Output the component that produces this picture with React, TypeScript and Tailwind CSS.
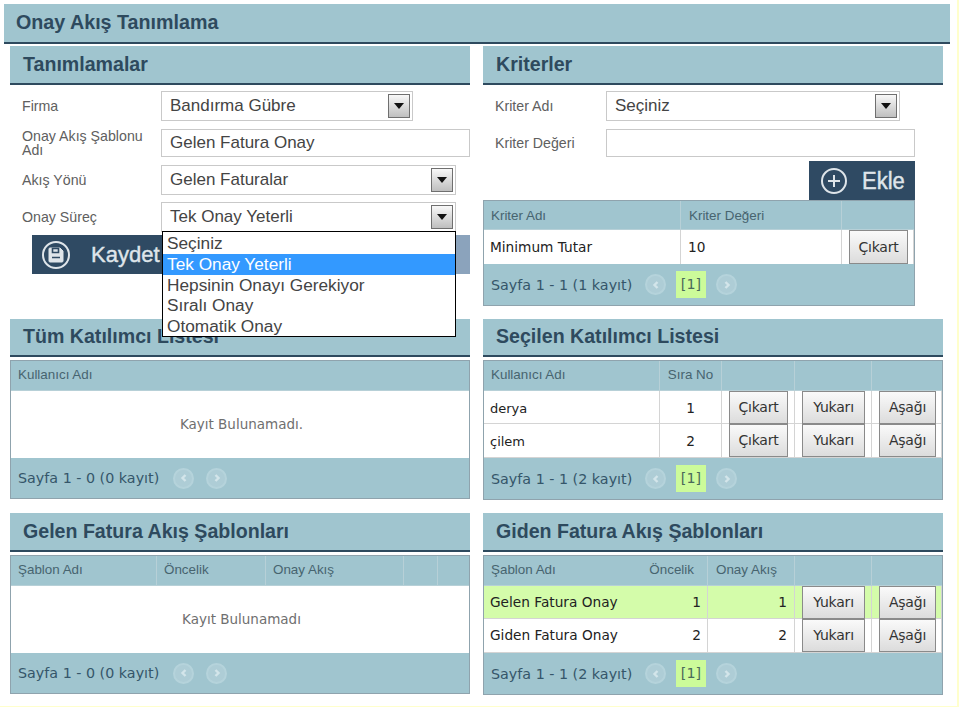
import type { ReactNode } from "react";

const Header = ({ title, h = "h-[39px]" }: { title: string; h?: string }) => (
  <div className={`${h} bg-[#a0c5cf] border-b-[2px] border-[#2e4a5e] pl-[13px] flex items-center text-[19.6px] font-bold text-[#2e4a5e]`}>
    {title}
  </div>
);

const Arrow = () => (
  <span className="w-[22px] h-[24px] border-[1px] border-[#6f6f6f] bg-gradient-to-b from-[#f8f8f8] to-[#bfbfbf] flex items-center justify-center">
    <svg width="10" height="6" viewBox="0 0 10 6">
      <path d="M0 0h10L5 6z" fill="#111" />
    </svg>
  </span>
);

const Select = ({ value, width, children }: { value: string; width: string; children?: ReactNode }) => (
  <div className={`relative h-[30px] ${width} border-[1px] border-[#c9c9c9] bg-white flex items-center justify-between pl-[8px] pr-[2px] text-[17px] text-[#444]`}>
    <span>{value}</span>
    <Arrow />
    {children}
  </div>
);

const Label = ({ children, w }: { children: ReactNode; w: string }) => (
  <div className={`${w} shrink-0 text-[14.2px] leading-[14px] text-[#606060]`}>{children}</div>
);

const Btn = ({ label, w }: { label: string; w: string }) => (
  <button className={`${w} h-[33px] border-[1px] border-[#8a8a8a] bg-gradient-to-b from-[#fafafa] to-[#dcdcdc] text-[14px] text-[#333] tracking-[-0.2px]`}>
    {label}
  </button>
);

const Circle = ({ dir }: { dir: "left" | "right" }) => (
  <span className="inline-flex w-[21px] h-[21px] rounded-full border-[2px] border-[#b5d3db] bg-[#aecdd6] items-center justify-center">
    <svg width="10" height="12" viewBox="0 0 10 12">
      <path d={dir === "left" ? "M6.5 3L3.5 6l3 3" : "M3.5 3l3 3-3 3"} fill="none" stroke="#d3e5ea" strokeWidth="2.4" />
    </svg>
  </span>
);

const Pager = ({ text, page, h = "h-[41px]" }: { text: string; page?: boolean; h?: string }) => (
  <div className={`${h} bg-[#a0c5cf] flex items-center pl-[7px] text-[14.3px] font-['DejaVu_Sans',sans-serif] text-[#35566a]`}>
    <span className={`${page ? "w-[154px]" : "w-[155px]"} pt-[2px]`}>{text}</span>
    <Circle dir="left" />
    {page ? (
      <>
        <span className="w-[30px] h-[27px] ml-[10px] bg-[#ccfb9a] flex items-center justify-center text-[#4a6a5a]">[1]</span>
        <span className="ml-[10px] flex">
          <Circle dir="right" />
        </span>
      </>
    ) : (
      <span className="ml-[12px] flex">
        <Circle dir="right" />
      </span>
    )}
  </div>
);

const GridBox = ({ children, w = "w-[460px]" }: { children: ReactNode; w?: string }) => (
  <div className={`${w} border-[1px] border-[#8fa3ad] bg-white overflow-hidden`}>{children}</div>
);

type HeadCell = { t?: ReactNode; line?: boolean; x?: string };

const Head = ({ cols, cells, h = "h-[30px]", pad = "" }: { cols: string; cells: HeadCell[]; h?: string; pad?: string }) => (
  <div className={`grid ${cols} ${h} bg-[#a0c5cf] border-b-[1px] border-[#b7d0d7] text-[13.4px] text-[#47646f] items-stretch`}>
    {cells.map((c, i) => (
      <div key={i} className={`flex items-center ${pad} ${c.x ?? "pl-[7px]"} ${c.line ? "border-r-[1px] border-[#b7d0d7]" : ""}`}>
        {c.t}
      </div>
    ))}
  </div>
);

const Cell = ({ children, className = "" }: { children?: ReactNode; className?: string }) => (
  <div className={`flex items-center border-r-[1px] border-[#d4d4d4] font-['DejaVu_Sans',sans-serif] text-[13.7px] text-[#222] ${className}`}>
    {children}
  </div>
);

const selectedCols = "grid-cols-[176px_62px_73px_77px_1fr]";
const gidenCols = "grid-cols-[224px_87px_77px_1fr]";
const kriterCols = "grid-cols-[197px_161px_1fr]";

const SelectedRow = ({ name, no, h }: { name: string; no: string; h: string }) => (
  <div className={`grid ${selectedCols} ${h} border-b-[1px] border-[#d4d4d4]`}>
    <Cell className="pl-[6px] pt-[2px] text-[13px]">{name}</Cell>
    <Cell className="justify-center pt-[2px]">{no}</Cell>
    <Cell className="pl-[7px]">
      <Btn label="Çıkart" w="w-[59px]" />
    </Cell>
    <Cell className="pl-[7px]">
      <Btn label="Yukarı" w="w-[63px]" />
    </Cell>
    <Cell className="pl-[7px] border-r-0">
      <Btn label="Aşağı" w="w-[57px]" />
    </Cell>
  </div>
);

const GidenRow = ({ name, no, h, active }: { name: string; no: string; h: string; active?: boolean }) => (
  <div className={`grid ${gidenCols} ${h} border-b-[1px] border-[#d4d4d4] ${active ? "bg-[#d4fcaa]" : ""}`}>
    <Cell className="pl-[6px] pr-[6px] justify-between">
      <span>{name}</span>
      <span>{no}</span>
    </Cell>
    <Cell className="justify-end pr-[7px]">{no}</Cell>
    <Cell className="pl-[7px]">
      <Btn label="Yukarı" w="w-[63px]" />
    </Cell>
    <Cell className="pl-[7px] border-r-0">
      <Btn label="Aşağı" w="w-[57px]" />
    </Cell>
  </div>
);

const Empty = ({ text }: { text: string }) => (
  <div className="h-[67px] pl-[3px] flex items-center justify-center font-['DejaVu_Sans',sans-serif] text-[13.5px] text-[#6f6f6f]">
    {text}
  </div>
);

const App = () => {
  return (
    <div className="w-[959px] h-[707px] bg-[#ffffcc] font-['Liberation_Sans',sans-serif] overflow-hidden">
      <div className="w-[957px] h-[706px] bg-white pt-[4px] pl-[4px]">
        <div className="w-[946px] h-[40px] bg-[#a0c5cf] border-b-[2px] border-[#2e4a5e] pl-[12px] flex items-center text-[19.7px] font-bold text-[#2e4a5e]">
          Onay Akış Tanımlama
        </div>

        <div className="pl-[6px] pt-[2px]">
          {/* tanimlamalar + kriterler */}
          <div className="grid grid-cols-[460px_460px] gap-x-[13px]">
            <div>
              <Header title="Tanımlamalar" />
              <div className="flex items-center mt-[6px] pl-[12px]">
                <Label w="w-[139px]">Firma</Label>
                <Select value="Bandırma Gübre" width="w-[252px]" />
              </div>
              <div className="flex items-center mt-[8px] pl-[12px]">
                <Label w="w-[139px]">Onay Akış Şablonu Adı</Label>
                <div className="w-[309px] h-[28px] border-[1px] border-[#c9c9c9] pl-[8px] flex items-center text-[17px] text-[#444]">
                  Gelen Fatura Onay
                </div>
              </div>
              <div className="flex items-center mt-[8px] pl-[12px]">
                <Label w="w-[139px]">Akış Yönü</Label>
                <Select value="Gelen Faturalar" width="w-[295px]" />
              </div>
              <div className="flex items-center mt-[7px] pl-[12px]">
                <Label w="w-[139px]">Onay Süreç</Label>
                <Select value="Tek Onay Yeterli" width="w-[295px] z-10">
                  <div className="absolute left-0 top-[28px] w-[294px] h-[106px] border-[1px] border-black bg-white pt-[1px] text-[17.25px] leading-[20.8px] text-[#444]">
                    <div className="pl-[4px]">Seçiniz</div>
                    <div className="pl-[4px] bg-[#3399ff] text-white">Tek Onay Yeterli</div>
                    <div className="pl-[4px]">Hepsinin Onayı Gerekiyor</div>
                    <div className="pl-[4px]">Sıralı Onay</div>
                    <div className="pl-[4px]">Otomatik Onay</div>
                  </div>
                </Select>
              </div>
              <div className="ml-[22px] mt-[3px] h-[39px] bg-[#8ba3bc]">
                <div className="w-[200px] h-full bg-[#2f4a63] flex items-center pl-[10px] text-[22px] text-[#dfe5ea]">
                  <svg width="28" height="28" viewBox="0 0 28 28" fill="none" stroke="#dfe5ea">
                    <circle cx="14" cy="14" r="13" strokeWidth="2" />
                    <path d="M7 8a1 1 0 0 1 1-1h10l3 3v10a1 1 0 0 1-1 1H8a1 1 0 0 1-1-1z" fill="#dfe5ea" strokeWidth="1" />
                    <path d="M10.5 7.5h6v4h-6zM10 16.5h8" stroke="#2f4a63" strokeWidth="1.6" />
                  </svg>
                  <span className="ml-[21px] [-webkit-text-stroke:0.4px_#dfe5ea]">Kaydet</span>
                </div>
              </div>
            </div>

            <div>
              <Header title="Kriterler" />
              <div className="flex items-center mt-[6px] pl-[12px]">
                <Label w="w-[111px]">Kriter Adı</Label>
                <Select value="Seçiniz" width="w-[294px]" />
              </div>
              <div className="flex items-center mt-[8px] pl-[12px]">
                <Label w="w-[111px]">Kriter Değeri</Label>
                <div className="w-[309px] h-[28px] border-[1px] border-[#c9c9c9]" />
              </div>
              <div className="w-[432px] flex justify-end mt-[4px]">
                <div className="w-[106px] h-[39px] bg-[#2f4a63] flex items-center pl-[12px] text-[22px] text-[#dfe5ea]">
                  <svg width="26" height="26" viewBox="0 0 26 26" fill="none" stroke="#dfe5ea" strokeWidth="2">
                    <circle cx="13" cy="13" r="12" />
                    <path d="M13 7v12M7 13h12" />
                  </svg>
                  <span className="ml-[15px] inline-block scale-y-110 [-webkit-text-stroke:0.4px_#dfe5ea]">Ekle</span>
                </div>
              </div>
              <GridBox w="w-[432px]">
                <Head
                  h="h-[29px]"
                  pad="pt-[2px]"
                  cols={kriterCols}
                  cells={[{ t: "Kriter Adı", line: true }, { t: "Kriter Değeri", line: true, x: "pl-[8px]" }, {}]}
                />
                <div className={`grid ${kriterCols} h-[34px]`}>
                  <Cell className="pl-[6px]">Minimum Tutar</Cell>
                  <Cell className="pl-[7px]">10</Cell>
                  <Cell className="pl-[7px] border-r-0">
                    <Btn label="Çıkart" w="w-[59px] h-[34px]" />
                  </Cell>
                </div>
                <Pager text="Sayfa 1 - 1 (1 kayıt)" page />
              </GridBox>
            </div>
          </div>

          {/* katilimci listeleri */}
          <div className="grid grid-cols-[460px_460px] gap-x-[13px] mt-[13px]">
            <div>
              <Header title="Tüm Katılımcı Listesi" h="h-[38px]" />
              <div className="mt-[3px]">
                <GridBox>
                  <Head cols="grid-cols-[1fr]" cells={[{ t: "Kullanıcı Adı" }]} />
                  <Empty text="Kayıt Bulunamadı." />
                  <Pager text="Sayfa 1 - 0 (0 kayıt)" h="h-[40px]" />
                </GridBox>
              </div>
            </div>
            <div>
              <Header title="Seçilen Katılımcı Listesi" h="h-[38px]" />
              <div className="mt-[3px]">
                <GridBox>
                  <Head
                    cols={selectedCols}
                    cells={[
                      { t: "Kullanıcı Adı", line: true },
                      { t: "Sıra No", line: true, x: "justify-center" },
                      { line: true },
                      { line: true },
                      {},
                    ]}
                  />
                  <SelectedRow name="derya" no="1" h="h-[33px]" />
                  <SelectedRow name="çilem" no="2" h="h-[34px]" />
                  <Pager text="Sayfa 1 - 1 (2 kayıt)" page />
                </GridBox>
              </div>
            </div>
          </div>

          {/* akis sablonlari */}
          <div className="grid grid-cols-[460px_460px] gap-x-[13px] mt-[13px]">
            <div>
              <Header title="Gelen Fatura Akış Şablonları" />
              <div className="mt-[3px]">
                <GridBox>
                  <Head
                    pad="pb-[1px]"
                    cols="grid-cols-[146px_109px_138px_34px_1fr]"
                    cells={[
                      { t: "Şablon Adı", line: true },
                      { t: "Öncelik", line: true },
                      { t: "Onay Akış", line: true },
                      { line: true },
                      {},
                    ]}
                  />
                  <Empty text="Kayıt Bulunamadı" />
                  <Pager text="Sayfa 1 - 0 (0 kayıt)" h="h-[40px]" />
                </GridBox>
              </div>
            </div>
            <div>
              <Header title="Giden Fatura Akış Şablonları" />
              <div className="mt-[3px]">
                <GridBox>
                  <Head
                    pad="pb-[1px]"
                    cols={gidenCols}
                    cells={[
                      {
                        t: (
                          <>
                            <span>Şablon Adı</span>
                            <span>Öncelik</span>
                          </>
                        ),
                        line: true,
                        x: "pl-[7px] pr-[13px] justify-between",
                      },
                      { t: "Onay Akış", line: true, x: "pl-[8px]" },
                      { line: true },
                      {},
                    ]}
                  />
                  <GidenRow name="Gelen Fatura Onay" no="1" h="h-[33px]" active />
                  <GidenRow name="Giden Fatura Onay" no="2" h="h-[34px]" />
                  <Pager text="Sayfa 1 - 1 (2 kayıt)" page />
                </GridBox>
              </div>
            </div>
          </div>
        </div>
      </div>
    </div>
  );
};

export default App;
